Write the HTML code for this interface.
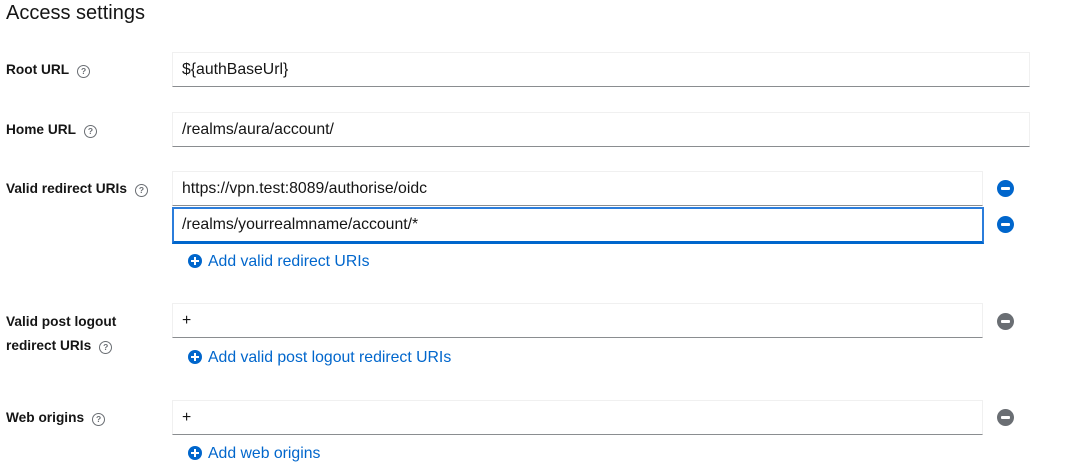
<!DOCTYPE html><html><head><style>
body{margin:0;width:1080px;height:466px;background:#fff;font-family:"Liberation Sans",sans-serif;color:#151515;position:relative;overflow:hidden}
h1{position:absolute;left:6px;top:0;margin:0;font-size:20px;font-weight:400;line-height:26px}
.l{position:absolute;left:6px;font-size:13.7px;font-weight:700;line-height:24px}
.q{display:inline-block;width:11px;height:11px;border:1.4px solid #6a6e73;border-radius:50%;font-size:8.5px;line-height:11px;text-align:center;color:#6a6e73;font-weight:700;vertical-align:0px;margin-left:8px}
.i{position:absolute;left:172px;box-sizing:border-box;border:1px solid #f0f0f0;border-bottom-color:#8a8d90;font-size:15.8px;padding-left:9px;line-height:34px;height:35px}
.f{border:2px solid #2b7ddb;border-bottom:3px solid #0066cc;padding-left:8px;line-height:32px}
.m{position:absolute;left:997px;width:17px;height:17px;border-radius:50%;background:#0066cc}
.m:after{content:"";position:absolute;left:4px;top:7px;width:9px;height:3px;background:#fff;border-radius:1px}
.g{background:#6a6e73}
.ad{position:absolute;left:188px;font-size:15.8px;color:#0066cc;line-height:20px}
.ad b{display:inline-block;width:14px;height:14px;border-radius:50%;background:#0066cc;position:relative;vertical-align:-2px;margin-right:6px}
.ad b:before{content:"";position:absolute;left:3px;top:6px;width:8px;height:2px;background:#fff}
.ad b:after{content:"";position:absolute;left:6px;top:3px;width:2px;height:8px;background:#fff}
</style></head><body>
<h1>Access settings</h1>
<div class="l" style="top:58px">Root URL<span class="q">?</span></div>
<div class="i" style="top:52px;width:858px">${authBaseUrl}</div>
<div class="l" style="top:118px">Home URL<span class="q">?</span></div>
<div class="i" style="top:112px;width:858px">/realms/aura/account/</div>
<div class="l" style="top:177px">Valid redirect URIs<span class="q">?</span></div>
<div class="i" style="top:171px;width:811px">https://vpn.test:8089/authorise/oidc</div>
<div class="i f" style="top:207px;width:812px;height:37px">/realms/yourrealmname/account/*</div>
<div class="m" style="top:180px"></div>
<div class="m" style="top:216px"></div>
<div class="ad" style="top:252px"><b></b>Add valid redirect URIs</div>
<div class="l" style="top:310px;line-height:24px">Valid post logout<br>redirect URIs<span class="q">?</span></div>
<div class="i" style="top:303px;width:811px">+</div>
<div class="m g" style="top:313px"></div>
<div class="ad" style="top:348px"><b></b>Add valid post logout redirect URIs</div>
<div class="l" style="top:406px">Web origins<span class="q">?</span></div>
<div class="i" style="top:400px;width:811px">+</div>
<div class="m g" style="top:409px"></div>
<div class="ad" style="top:444px"><b></b>Add web origins</div>
</body></html>
